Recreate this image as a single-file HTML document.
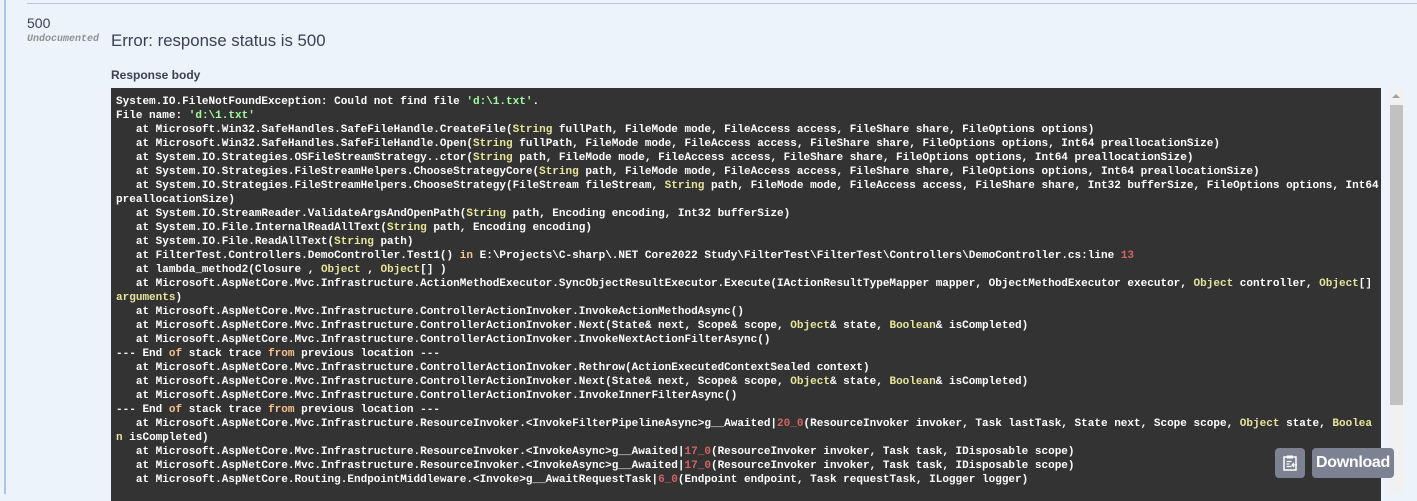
<!DOCTYPE html>
<html><head><meta charset="utf-8"><style>
html,body{margin:0;padding:0}
body{width:1417px;height:494px;overflow:hidden;background:#ecf3fb;position:relative;font-family:"Liberation Sans",sans-serif}
.lb{position:absolute;left:4px;top:0;width:2px;height:494px;background:#a9c7ea}
.tl{position:absolute;left:27px;top:3px;right:0;height:1px;background:#b8c8da}
.code{position:absolute;left:27px;top:15px;font-size:14px;color:#3b4151}
.und{position:absolute;left:27px;top:34px;font-size:10px;font-style:italic;font-weight:bold;color:#909090;font-family:"Liberation Mono",monospace}
.err{position:absolute;left:111px;top:31px;font-size:16.8px;color:#3b4151}
.rb{position:absolute;left:111px;top:68px;font-size:12px;font-weight:bold;color:#3b4151}
pre{position:absolute;left:111px;top:88px;width:1265px;height:406px;margin:0;padding:7px 0 0 5px;background:#333;color:#fff;font-family:"Liberation Mono",monospace;font-weight:bold;font-size:11.02px;line-height:14px;overflow:hidden}
.s{color:#a2fca2}.t{color:#e8e49a}.k{color:#fcc28c}.n{color:#d36363}
.sb{position:absolute;left:1389px;top:88px;width:15px;height:406px;background:#f1f1f1}
.sb div{position:absolute;left:1px;top:17px;width:13px;height:300px;background:#c1c1c1}
.sb span{position:absolute;left:3px;top:6px;border:4px solid transparent;border-bottom:4px solid #a3a3a3;border-top:0}
.btn{position:absolute;top:448px;height:30px;background:#7d8293;border-radius:4px;color:#fff}
</style></head><body>
<div class="lb"></div><div class="tl"></div>
<div class="code">500</div>
<div class="und">Undocumented</div>
<div class="err">Error: response status is 500</div>
<div class="rb">Response body</div>
<pre>System.IO.FileNotFoundException: Could not find file <span class="s">'d:\1.txt'</span>.
File name: <span class="s">'d:\1.txt'</span>
   at Microsoft.Win32.SafeHandles.SafeFileHandle.CreateFile(<span class="t">String</span> fullPath, FileMode mode, FileAccess access, FileShare share, FileOptions options)
   at Microsoft.Win32.SafeHandles.SafeFileHandle.Open(<span class="t">String</span> fullPath, FileMode mode, FileAccess access, FileShare share, FileOptions options, Int64 preallocationSize)
   at System.IO.Strategies.OSFileStreamStrategy..ctor(<span class="t">String</span> path, FileMode mode, FileAccess access, FileShare share, FileOptions options, Int64 preallocationSize)
   at System.IO.Strategies.FileStreamHelpers.ChooseStrategyCore(<span class="t">String</span> path, FileMode mode, FileAccess access, FileShare share, FileOptions options, Int64 preallocationSize)
   at System.IO.Strategies.FileStreamHelpers.ChooseStrategy(FileStream fileStream, <span class="t">String</span> path, FileMode mode, FileAccess access, FileShare share, Int32 bufferSize, FileOptions options, Int64
preallocationSize)
   at System.IO.StreamReader.ValidateArgsAndOpenPath(<span class="t">String</span> path, Encoding encoding, Int32 bufferSize)
   at System.IO.File.InternalReadAllText(<span class="t">String</span> path, Encoding encoding)
   at System.IO.File.ReadAllText(<span class="t">String</span> path)
   at FilterTest.Controllers.DemoController.Test1() <span class="k">in</span> E:\Projects\C-sharp\.NET Core2022 Study\FilterTest\FilterTest\Controllers\DemoController.cs:line <span class="n">13</span>
   at lambda_method2(Closure , <span class="t">Object</span> , <span class="t">Object</span>[] )
   at Microsoft.AspNetCore.Mvc.Infrastructure.ActionMethodExecutor.SyncObjectResultExecutor.Execute(IActionResultTypeMapper mapper, ObjectMethodExecutor executor, <span class="t">Object</span> controller, <span class="t">Object</span>[]
<span class="t">arguments</span>)
   at Microsoft.AspNetCore.Mvc.Infrastructure.ControllerActionInvoker.InvokeActionMethodAsync()
   at Microsoft.AspNetCore.Mvc.Infrastructure.ControllerActionInvoker.Next(State&amp; next, Scope&amp; scope, <span class="t">Object</span>&amp; state, <span class="t">Boolean</span>&amp; isCompleted)
   at Microsoft.AspNetCore.Mvc.Infrastructure.ControllerActionInvoker.InvokeNextActionFilterAsync()
--- End <span class="k">of</span> stack trace <span class="k">from</span> previous location ---
   at Microsoft.AspNetCore.Mvc.Infrastructure.ControllerActionInvoker.Rethrow(ActionExecutedContextSealed context)
   at Microsoft.AspNetCore.Mvc.Infrastructure.ControllerActionInvoker.Next(State&amp; next, Scope&amp; scope, <span class="t">Object</span>&amp; state, <span class="t">Boolean</span>&amp; isCompleted)
   at Microsoft.AspNetCore.Mvc.Infrastructure.ControllerActionInvoker.InvokeInnerFilterAsync()
--- End <span class="k">of</span> stack trace <span class="k">from</span> previous location ---
   at Microsoft.AspNetCore.Mvc.Infrastructure.ResourceInvoker.&lt;InvokeFilterPipelineAsync&gt;g__Awaited|<span class="n">20_0</span>(ResourceInvoker invoker, Task lastTask, State next, Scope scope, <span class="t">Object</span> state, <span class="t">Boolea</span>
<span class="t">n</span> isCompleted)
   at Microsoft.AspNetCore.Mvc.Infrastructure.ResourceInvoker.&lt;InvokeAsync&gt;g__Awaited|<span class="n">17_0</span>(ResourceInvoker invoker, Task task, IDisposable scope)
   at Microsoft.AspNetCore.Mvc.Infrastructure.ResourceInvoker.&lt;InvokeAsync&gt;g__Awaited|<span class="n">17_0</span>(ResourceInvoker invoker, Task task, IDisposable scope)
   at Microsoft.AspNetCore.Routing.EndpointMiddleware.&lt;Invoke&gt;g__AwaitRequestTask|<span class="n">6_0</span>(Endpoint endpoint, Task requestTask, ILogger logger)</pre>
<div class="sb"><span></span><div></div></div>
<div class="btn" style="left:1275px;width:30px">
<svg width="30" height="30" viewBox="0 0 30 30"><path d="M12 9h-3v13h12v-13h-3" fill="none" stroke="#fff" stroke-width="1.5"/><rect x="12" y="7.5" width="6" height="3" fill="#fff"/><path d="M11.5 13.5h5M11.5 16h3M11.5 18.5h5M22 17h-5m2-2l-2 2 2 2" fill="none" stroke="#fff" stroke-width="1.2"/></svg></div>
<div class="btn" style="left:1312px;width:82px;font-weight:bold;font-size:16px;line-height:30px;text-align:center;letter-spacing:-0.3px">Download</div>
</body></html>
